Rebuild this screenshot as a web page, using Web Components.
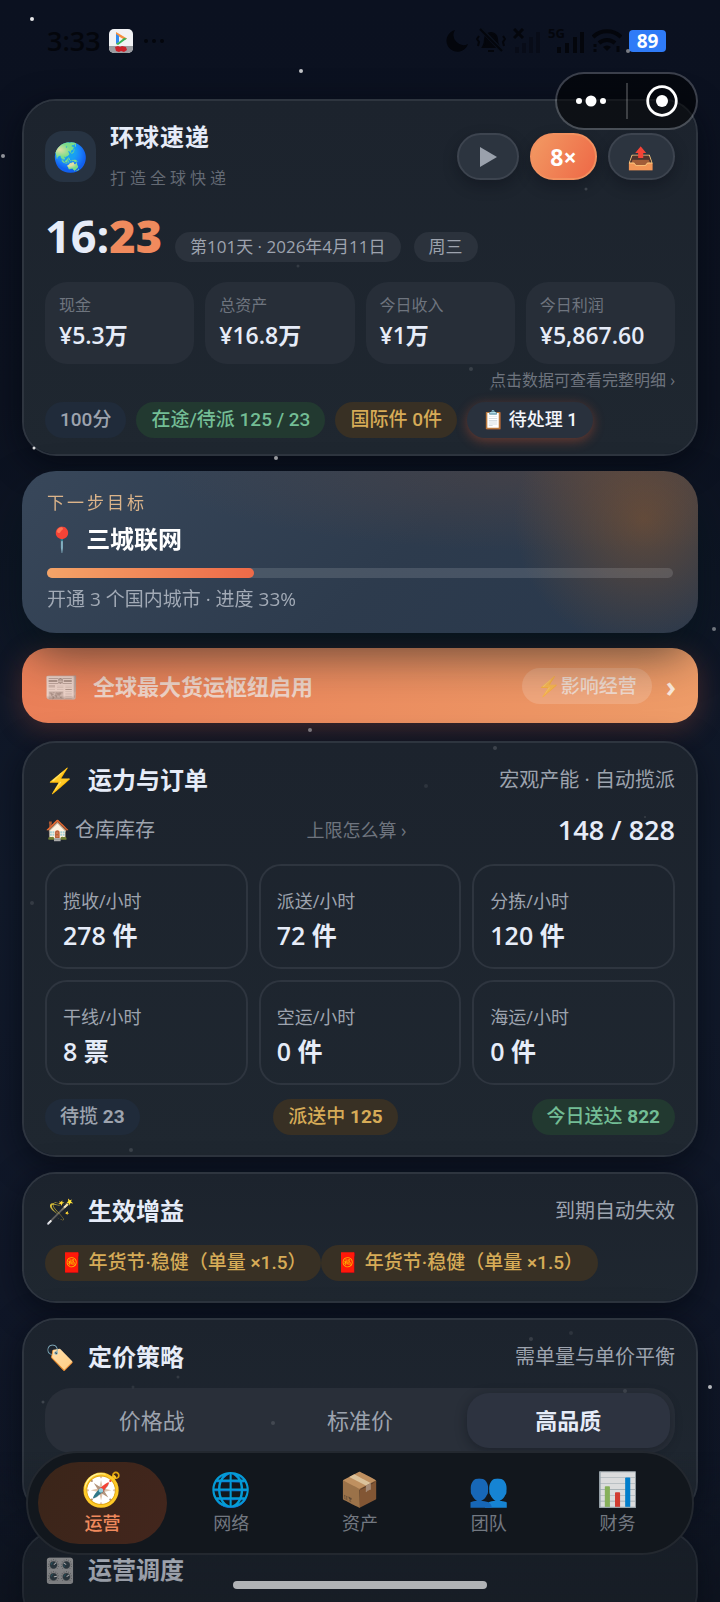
<!DOCTYPE html>
<html lang="zh-CN">
<head>
<meta charset="utf-8">
<meta name="viewport" content="width=device-width, initial-scale=1">
<title>环球速递</title>
<style>
    html, body {
        margin: 0;
        height: 100%;
    }

    body {
        --text: #e6ecf8;
        --muted: #9da3ae;
        --dim: #6e747e;
        --orange: #f08a5d;
        --line: #2e353f;
        background: #0d1422;
        color: var(--text);
        font-family: 'Open Sans', 'Noto Sans CJK SC', 'Noto Color Emoji', sans-serif;
        font-size: 19px;
        line-height: 24px;
    }
</style>
</head>
<body>
<express-app></express-app>

<script>
class BaseElement extends HTMLElement {
    constructor() {
        super();
        const template = document.createElement('template');
        template.innerHTML = `
            <style>
                *, :host {
                    box-sizing: border-box;
                }
                :host {
                    display: block;
                }
                button {
                    font: inherit;
                    color: inherit;
                    background: none;
                    border: 0;
                    margin: 0;
                    padding: 0;
                    text-align: inherit;
                }
                a {
                    color: inherit;
                    text-decoration: none;
                }
                h1, h2, p, dl, dt, dd {
                    margin: 0;
                    font-weight: inherit;
                }
            </style>
            ${this.render()}
        `;
        this.attachShadow({mode: 'open'});
        this.shadowRoot.appendChild(template.content.cloneNode(true));
    }

    render() {
        return '<slot></slot>';
    }
}

class StarField extends BaseElement {
    // x, y, radius, opacity
    get stars() {
        return [
            [32, 19, 2, .9], [301, 71, 2, .75], [3, 156, 2, .55], [34, 448, 1.5, .85], [276, 458, 2, .6],
            [714, 629, 2, .45], [310, 730, 2, .4], [710, 1387, 2, .7], [628, 51, 2, .45],
            [586, 189, 1.5, .15], [298, 266, 1.5, .1], [471, 369, 2, .12], [491, 389, 1.5, .1],
            [495, 748, 2, .15], [426, 786, 2, .08], [32, 903, 2, .1], [131, 1150, 2, .13],
            [178, 1377, 1.5, .1], [133, 1387, 1.5, .08], [43, 1402, 1.5, .15], [531, 1339, 2, .12],
            [571, 1333, 2, .08], [625, 1391, 2, .1], [273, 1423, 2, .12], [645, 817, 1, .12]
        ];
    }

    render() {
        return `
            <style>
                :host {
                    position: fixed;
                    inset: 0;
                    pointer-events: none;
                }
            </style>
            <svg width="100%" height="100%" aria-hidden="true">
                ${this.stars.map(([x, y, r, o]) => `<circle cx="${x / 7.2}%" cy="${y}" r="${r}" fill="#fff" opacity="${o}"/>`).join('')}
            </svg>
        `;
    }
}

class StatusBar extends BaseElement {
    render() {
        return `
            <style>
                :host {
                    display: flex;
                    align-items: center;
                    gap: 7px;
                    padding: 23px 54px 40px 47px;
                    color: #04060c;
                    line-height: 26px;
                }
                .time {
                    font-size: 27px;
                    font-weight: 600;
                }
                .app {
                    margin: 0 3px 0 1px;
                }
                .space {
                    flex: 1;
                }
                .battery {
                    background: #2f7bf7;
                    color: #fff;
                    border-radius: 4px;
                    width: 37px;
                    font-size: 19px;
                    font-weight: 700;
                    line-height: 22px;
                    text-align: center;
                }
            </style>
            <span class="time">3:33</span>
            <svg class="app" width="24" height="24" viewBox="0 0 24 24">
                <rect width="24" height="24" rx="5" fill="#f1f2f4"/>
                <path d="M0 17h24v2a5 5 0 0 1-5 5H5a5 5 0 0 1-5-5z" fill="#9b9da1"/>
                <path d="M7 3v12l2-1V7l7 4 2-1.500z" fill="#f5903d"/>
                <path d="M7 5v10l3-2V7z" fill="#2f8bf0"/>
                <path d="M18 9.500L9 16l-2-1 3-2 5-4z" fill="#35b558"/>
                <path d="M6 18l3-1 2 1 2-1 4 1 1 3-3 2-3-1-2 1-3-1z" fill="#cc2029"/>
            </svg>
            <svg width="22" height="6" viewBox="0 0 22 6" fill="currentColor">
                <circle cx="3" cy="3" r="2"/><circle cx="11" cy="3" r="2"/><circle cx="19" cy="3" r="2"/>
            </svg>
            <span class="space"></span>
            <svg width="24" height="24" viewBox="0 0 24 24" fill="currentColor">
                <path d="M10 1a11 11 0 1 0 13 14A10 10 0 0 1 10 1z"/>
            </svg>
            <svg width="30" height="26" viewBox="0 0 30 26" fill="none" stroke="currentColor" stroke-width="2">
                <path d="M7 19c2-3 2-5 2-8a6 6 0 0 1 12 0c0 3 0 5 2 8z" fill="currentColor"/>
                <path d="M12 23h6M3 8l-2 3 2 3-1 4M27 8l2 3-2 3 1 4"/>
                <path d="M5 1l21 22" stroke="#0c121e" stroke-width="4"/>
                <path d="M4 1l22 22"/>
            </svg>
            <svg width="28" height="26" viewBox="0 0 28 26" fill="currentColor">
                <path d="M1 1l9 9M10 1l-9 9" stroke="currentColor" stroke-width="3"/>
                <path opacity=".4" d="M2 19h4v6H2zM9 15h4v10H9zM16 9h4v16h-4zM23 4h4v21h-4z"/>
            </svg>
            <svg width="37" height="36" viewBox="0 -5 37 36" fill="currentColor">
                <text x="0" y="10" font-size="13" font-weight="700">5G</text>
                <path d="M9 19h4v6H9zM17 15h4v10h-4zM25 9h4v16h-4zM32 4h4v21h-4z"/>
            </svg>
            <svg width="30" height="26" viewBox="0 0 30 26" fill="none" stroke="currentColor" stroke-width="4">
                <path d="M1 9a20 20 0 0 1 28 0M7 15a12 12 0 0 1 16 0"/>
                <path d="M15 23l-4-4a6 6 0 0 1 8 0z" fill="currentColor" stroke="none"/>
                <path d="M3 16v3M3 21v3M26 18v6" stroke-width="3"/>
            </svg>
            <span class="battery">89</span>
        `;
    }
}

class MiniCapsule extends BaseElement {
    render() {
        return `
            <style>
                :host {
                    position: fixed;
                    top: 72px;
                    right: 22px;
                    display: flex;
                    align-items: center;
                    width: 143px;
                    height: 58px;
                    border: 2px solid rgba(255, 255, 255, .2);
                    border-radius: 29px;
                    background: rgba(0, 0, 0, .52);
                    background-clip: padding-box;
                }
                button {
                    flex: 1;
                    display: flex;
                    justify-content: center;
                }
                i {
                    width: 2px;
                    height: 36px;
                    background: rgba(255, 255, 255, .2);
                }
            </style>
            <button aria-label="更多">
                <svg width="32" height="12" viewBox="0 0 32 12" fill="#fff">
                    <circle cx="4" cy="6" r="3"/><circle cx="16" cy="6" r="5.5"/><circle cx="28" cy="6" r="3"/>
                </svg>
            </button>
            <i></i>
            <button aria-label="关闭">
                <svg width="32" height="32" viewBox="0 0 32 32" fill="#fff">
                    <circle cx="16" cy="16" r="14.3" fill="none" stroke="#fff" stroke-width="2.8"/>
                    <circle cx="16" cy="16" r="6"/>
                </svg>
            </button>
        `;
    }
}

class PanelCard extends BaseElement {
    render() {
        return `
            <style>
                :host {
                    padding: 21px 21px var(--pad-bottom, 20px);
                    border: 2px solid var(--line);
                    border-radius: 34px;
                    background: linear-gradient(#1c232d, #1f2730) padding-box;
                    box-shadow: 0 8px 32px rgba(4, 7, 14, .6);
                }
                .head {
                    display: flex;
                    align-items: center;
                    gap: 13px;
                    margin-bottom: var(--head-gap, 18px);
                    line-height: 32px;
                }
                :host(:not([heading])) .head {
                    display: none;
                }
                .icon {
                    width: 30px;
                    font-size: 24px;
                }
                h2 {
                    flex: 1;
                    font-size: 24px;
                    font-weight: 700;
                }
                .note {
                    font-size: 20px;
                    color: var(--muted);
                }
            </style>
            <div class="head">
                <span class="icon">${this.getAttribute('icon') || ''}</span>
                <h2>${this.getAttribute('heading') || ''}</h2>
                <span class="note">${this.getAttribute('note') || ''}</span>
            </div>
            <slot></slot>
        `;
    }
}

class TagChip extends BaseElement {
    render() {
        return `
            <style>
                :host {
                    display: inline-block;
                    padding: 0 15px;
                    border-radius: 18px;
                    background: #202b3a;
                    color: var(--muted);
                    font-family: Roboto, 'Noto Sans CJK SC', 'Noto Color Emoji', sans-serif;
                    font-weight: 500;
                    line-height: 36px;
                    white-space: nowrap;
                }
                :host([tone=green]) {
                    background: #223930;
                    color: #73bd95;
                }
                :host([tone=gold]) {
                    background: #383024;
                    color: #d6ab57;
                }
                :host([tone=date]) {
                    border-radius: 15px;
                    background: #2b323c;
                    font-family: inherit;
                    font-size: 17px;
                    font-weight: 400;
                    line-height: 30px;
                }
                :host([tone=todo]) {
                    background: #29313d;
                    color: #f3f5fa;
                    font-size: 18px;
                    box-shadow: 0 3px 12px rgba(214, 88, 50, .4);
                }
            </style>
            <slot></slot>
        `;
    }
}

class HeaderPanel extends BaseElement {
    render() {
        const metrics = [['现金', '¥5.3万'], ['总资产', '¥16.8万'], ['今日收入', '¥1万'], ['今日利润', '¥5,867.60']];
        return `
            <style>
                panel-card {
                    --pad-bottom: 16px;
                }
                .brand {
                    display: flex;
                    align-items: center;
                    gap: 11px;
                    margin-bottom: 22px;
                }
                .logo {
                    width: 51px;
                    height: 51px;
                    border-radius: 18px;
                    background: #273342;
                    font-size: 28px;
                    line-height: 51px;
                    text-align: center;
                }
                .name {
                    flex: 1;
                    display: grid;
                    gap: 13px;
                    margin-left: 3px;
                }
                h1 {
                    font-size: 24px;
                    font-weight: 700;
                    letter-spacing: 1px;
                    line-height: 30px;
                }
                .name p {
                    font-size: 16px;
                    letter-spacing: 4px;
                    line-height: 26px;
                    color: #646a74;
                }
                .ctl {
                    display: flex;
                    align-items: center;
                    justify-content: center;
                    height: 47px;
                    padding: 0 18px;
                    border: 2px solid #3d444f;
                    border-radius: 24px;
                    background: #2c343f;
                    box-shadow: 0 6px 14px rgba(8, 12, 20, .35);
                    font-size: 22px;
                }
                .ctl.speed {
                    border-color: #f2905f;
                    background: linear-gradient(120deg, #f29a63, #ee6846);
                    color: #fff;
                    font-size: 23px;
                    font-weight: 700;
                }
                .clock {
                    display: flex;
                    align-items: baseline;
                    gap: 13px;
                    margin-bottom: 20px;
                }
                time {
                    font-size: 45px;
                    font-weight: 700;
                    line-height: 46px;
                }
                time b {
                    color: var(--orange);
                }
                .metrics {
                    display: grid;
                    grid-template-columns: repeat(4, 1fr);
                    gap: 11px;
                }
                .metrics button {
                    padding: 11px 14px;
                    border-radius: 22px;
                    background: #272e38;
                }
                .metrics span, .metrics strong {
                    display: block;
                    font-size: 16px;
                    line-height: 24px;
                    color: var(--dim);
                }
                .metrics strong {
                    font-size: 23px;
                    font-weight: 600;
                    line-height: 36px;
                    color: var(--text);
                }
                .hint {
                    display: block;
                    margin: 5px 0 11px;
                    font-size: 16px;
                    line-height: 22px;
                    text-align: right;
                    color: var(--dim);
                }
                .tags {
                    display: flex;
                    gap: 10px;
                }
            </style>
            <panel-card>
                <div class="brand">
                    <div class="logo">🌏</div>
                    <div class="name">
                        <h1>环球速递</h1>
                        <p>打造全球快递</p>
                    </div>
                    <button class="ctl" aria-label="播放">
                        <svg width="22" height="22" viewBox="0 0 22 22"><path d="M3 1l17 10L3 21z" fill="#9aa1ac"/></svg>
                    </button>
                    <button class="ctl speed">8×</button>
                    <button class="ctl" aria-label="导出">📤</button>
                </div>
                <div class="clock">
                    <time>16:<b>23</b></time>
                    <tag-chip tone="date">第101天 · 2026年4月11日</tag-chip>
                    <tag-chip tone="date">周三</tag-chip>
                </div>
                <div class="metrics">
                    ${metrics.map(([label, value]) => `<button><span>${label}</span><strong>${value}</strong></button>`).join('')}
                </div>
                <a class="hint" href="#detail">点击数据可查看完整明细 ›</a>
                <div class="tags">
                    <tag-chip>100分</tag-chip>
                    <tag-chip tone="green">在途/待派 125 / 23</tag-chip>
                    <tag-chip tone="gold">国际件 0件</tag-chip>
                    <tag-chip tone="todo">📋 待处理 1</tag-chip>
                </div>
            </panel-card>
        `;
    }
}

class GoalCard extends BaseElement {
    render() {
        return `
            <style>
                :host {
                    position: relative;
                    z-index: 1;
                    padding: 19px 25px 22px;
                    border-radius: 34px;
                    background:
                        radial-gradient(circle 130px at 92% 30%, rgba(150, 90, 40, .48), rgba(150, 90, 40, 0)),
                        radial-gradient(ellipse 60% 50% at 80% 0, rgba(120, 80, 60, .3), rgba(120, 80, 60, 0)),
                        linear-gradient(135deg, #38475a, #2d3b4d 55%, #29384c);
                    box-shadow: 0 24px 48px -4px rgba(4, 20, 22, .62);
                }
                .eyebrow {
                    font-size: 17px;
                    letter-spacing: 3px;
                    line-height: 26px;
                    color: #dcb48a;
                }
                h2 {
                    margin: 5px 0 11px;
                    color: #fff;
                    font-size: 24px;
                    font-weight: 700;
                    line-height: 36px;
                }
                h2 span {
                    margin-right: 3px;
                }
                .bar {
                    height: 10px;
                    border-radius: 5px;
                    background: rgba(255, 255, 255, .13);
                }
                .fill {
                    width: 33%;
                    height: 100%;
                    border-radius: 5px;
                    background: linear-gradient(90deg, #f4a468, #ee6a48);
                }
                .desc {
                    margin-top: 9px;
                    color: #a2aab6;
                }
            </style>
            <p class="eyebrow">下一步目标</p>
            <h2><span>📍</span> 三城联网</h2>
            <div class="bar" role="progressbar" aria-valuenow="33" aria-valuemin="0" aria-valuemax="100"><div class="fill"></div></div>
            <p class="desc">开通 3 个国内城市 · 进度 33%</p>
        `;
    }
}

class NewsBanner extends BaseElement {
    render() {
        return `
            <style>
                :host {
                    margin-bottom: 3px;
                }
                a {
                    display: flex;
                    align-items: center;
                    gap: 14px;
                    height: 75px;
                    padding: 0 22px;
                    border-radius: 26px;
                    background: linear-gradient(100deg, #ea7f58, #ee9c68);
                    box-shadow: 0 6px 28px rgba(226, 96, 60, .25);
                }
                .icon {
                    font-size: 28px;
                    opacity: .75;
                }
                .text {
                    flex: 1;
                    font-size: 22px;
                    font-weight: 600;
                    color: rgba(240, 230, 225, .82);
                }
                .tag {
                    padding: 0 15px;
                    border-radius: 18px;
                    background: rgba(255, 255, 255, .16);
                    color: rgba(240, 230, 225, .82);
                    font-weight: 500;
                    line-height: 36px;
                }
                .tag span {
                    opacity: .6;
                }
                .more {
                    color: #fbe9dc;
                    font-size: 28px;
                    font-weight: 700;
                }
            </style>
            <a href="#news">
                <span class="icon">📰</span>
                <span class="text">全球最大货运枢纽启用</span>
                <span class="tag"><span>⚡</span>影响经营</span>
                <span class="more">›</span>
            </a>
        `;
    }
}

class CapacityPanel extends BaseElement {
    render() {
        const rates = [
            ['揽收/小时', '278 件'], ['派送/小时', '72 件'], ['分拣/小时', '120 件'],
            ['干线/小时', '8 票'], ['空运/小时', '0 件'], ['海运/小时', '0 件']
        ];
        return `
            <style>
                .stock, .tags {
                    display: flex;
                    align-items: center;
                    justify-content: space-between;
                }
                .stock {
                    margin-bottom: 18px;
                    font-size: 20px;
                    line-height: 32px;
                    color: var(--muted);
                }
                .stock a {
                    font-size: 18px;
                    color: var(--dim);
                }
                .stock strong {
                    font-size: 27px;
                    font-weight: 600;
                    color: var(--text);
                }
                .rates {
                    display: grid;
                    grid-template-columns: repeat(3, 1fr);
                    gap: 11px;
                    margin-bottom: 14px;
                }
                dl {
                    padding: 20px 16px 13px;
                    border: 2px solid var(--line);
                    border-radius: 22px;
                }
                dt {
                    font-size: 18px;
                    line-height: 30px;
                    color: var(--muted);
                }
                dd {
                    font-size: 25px;
                    font-weight: 600;
                    line-height: 38px;
                }
            </style>
            <panel-card icon="⚡" heading="运力与订单" note="宏观产能 · 自动揽派">
                <div class="stock">
                    <span>🏠 仓库库存</span>
                    <a href="#limit">上限怎么算 ›</a>
                    <strong>148 / 828</strong>
                </div>
                <div class="rates">
                    ${rates.map(([label, value]) => `<dl><dt>${label}</dt><dd>${value}</dd></dl>`).join('')}
                </div>
                <div class="tags">
                    <tag-chip>待揽 <b>23</b></tag-chip>
                    <tag-chip tone="gold">派送中 <b>125</b></tag-chip>
                    <tag-chip tone="green">今日送达 <b>822</b></tag-chip>
                </div>
            </panel-card>
        `;
    }
}

class BuffPanel extends BaseElement {
    render() {
        return `
            <style>
                .buffs {
                    display: flex;
                }
            </style>
            <panel-card icon="🪄" heading="生效增益" note="到期自动失效">
                <div class="buffs">
                    <tag-chip tone="gold">🧧 年货节·稳健（单量 ×1.5）</tag-chip>
                    <tag-chip tone="gold">🧧 年货节·稳健（单量 ×1.5）</tag-chip>
                </div>
            </panel-card>
        `;
    }
}

class PricePanel extends BaseElement {
    render() {
        return `
            <style>
                panel-card {
                    --head-gap: 15px;
                    --pad-bottom: 61px;
                }
                .segment {
                    display: grid;
                    grid-template-columns: repeat(3, 1fr);
                    gap: 5px;
                    padding: 5px;
                    border-radius: 26px;
                    background: #292f39;
                }
                label {
                    border-radius: 22px;
                    font-size: 22px;
                    line-height: 55px;
                    text-align: center;
                    color: var(--muted);
                }
                input {
                    position: absolute;
                    opacity: 0;
                }
                label:has(input:checked) {
                    background: #2d3340;
                    box-shadow: 0 3px 12px rgba(10, 14, 22, .4);
                    color: var(--text);
                    font-weight: 700;
                }
            </style>
            <panel-card icon="🏷️" heading="定价策略" note="需单量与单价平衡">
                <div class="segment">
                    <label><input type="radio" name="price">价格战</label>
                    <label><input type="radio" name="price">标准价</label>
                    <label><input type="radio" name="price" checked>高品质</label>
                </div>
            </panel-card>
        `;
    }
}

class TabBar extends BaseElement {
    render() {
        const tabs = [['🧭', '运营'], ['🌐', '网络'], ['📦', '资产'], ['👥', '团队'], ['📊', '财务']];
        return `
            <style>
                :host {
                    position: fixed;
                    left: 0;
                    right: 0;
                    bottom: 0;
                    padding: 0 26px 13px;
                    background: linear-gradient(rgba(13, 17, 24, 0), rgba(13, 17, 24, .3) 60%, rgba(13, 17, 24, .4));
                }
                nav {
                    display: grid;
                    grid-template-columns: repeat(5, 1fr);
                    padding: 9px 10px;
                    border: 2px solid #23282f;
                    border-radius: 52px;
                    background: #12171d;
                }
                button {
                    padding: 8px 0;
                    border-radius: 41px;
                    font-size: 18px;
                    line-height: 26px;
                    text-align: center;
                    color: #727881;
                }
                span {
                    display: block;
                    font-family: 'Noto Color Emoji', sans-serif;
                    font-size: 33px;
                    line-height: 40px;
                    opacity: .85;
                }
                .active {
                    background: linear-gradient(120deg, #3a2519, #43261d);
                    color: var(--orange);
                    font-weight: 500;
                }
                .active span {
                    opacity: 1;
                }
                .home {
                    width: 38%;
                    height: 8px;
                    margin: 26px auto 0;
                    border-radius: 4px;
                    background: #b0b3b6;
                }
            </style>
            <nav>
                ${tabs.map(([icon, name], i) => `<button${i ? '' : ' class="active"'}><span>${icon}</span>${name}</button>`).join('')}
            </nav>
            <div class="home"></div>
        `;
    }
}

class ExpressApp extends BaseElement {
    render() {
        return `
            <style>
                :host {
                    height: 100%;
                    overflow: hidden;
                    background: linear-gradient(#0b1120, #0c1220 25%, #111a2b 55%, #101728 80%, #0f1625);
                }
                main {
                    display: flex;
                    flex-direction: column;
                    gap: 15px;
                    padding: 0 22px;
                }
                main > * {
                    flex-shrink: 0;
                }
            </style>
            <status-bar></status-bar>
            <main>
                <header-panel></header-panel>
                <goal-card></goal-card>
                <news-banner></news-banner>
                <capacity-panel></capacity-panel>
                <buff-panel></buff-panel>
                <price-panel></price-panel>
                <panel-card icon="🎛️" heading="运营调度"></panel-card>
            </main>
            <star-field></star-field>
            <tab-bar></tab-bar>
            <mini-capsule></mini-capsule>
        `;
    }
}

customElements.define('star-field', StarField);
customElements.define('status-bar', StatusBar);
customElements.define('mini-capsule', MiniCapsule);
customElements.define('panel-card', PanelCard);
customElements.define('tag-chip', TagChip);
customElements.define('header-panel', HeaderPanel);
customElements.define('goal-card', GoalCard);
customElements.define('news-banner', NewsBanner);
customElements.define('capacity-panel', CapacityPanel);
customElements.define('buff-panel', BuffPanel);
customElements.define('price-panel', PricePanel);
customElements.define('tab-bar', TabBar);
customElements.define('express-app', ExpressApp);
</script>
</body>
</html>
